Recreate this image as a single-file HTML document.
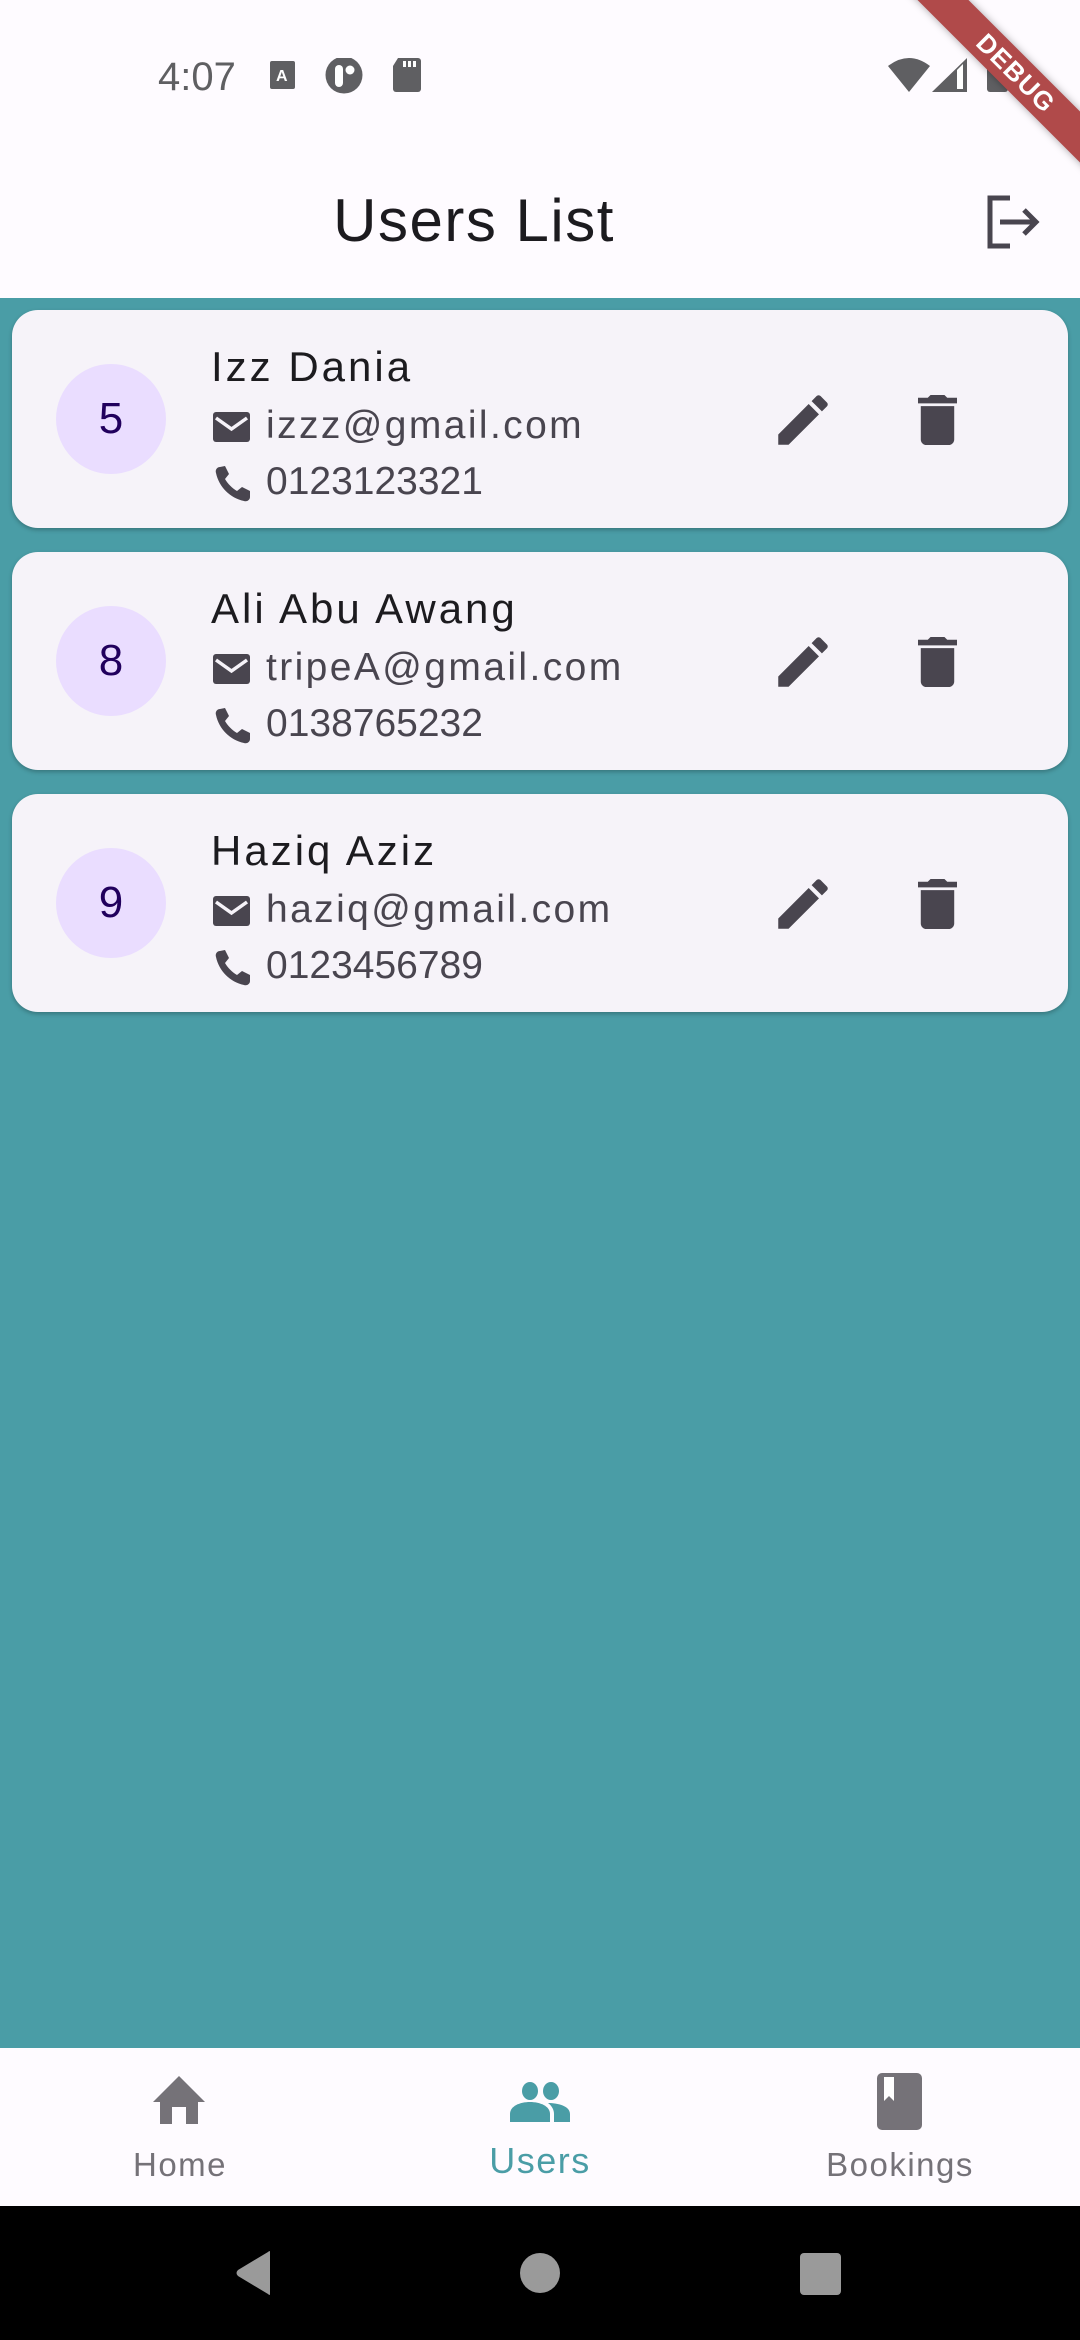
<!DOCTYPE html>
<html><head><meta charset="utf-8">
<style>
*{margin:0;padding:0;box-sizing:border-box}
html,body{width:1080px;height:2340px;overflow:hidden;background:#4A9DA6;font-family:"Liberation Sans",sans-serif}
.abs{position:absolute}
#top{left:0;top:0;width:1080px;height:298px;background:#FEFBFF}
.time{left:158px;top:55px;font-size:40px;color:#5f5f62}
.title{left:0;width:948px;top:186px;text-align:center;font-size:60px;color:#1c1b1f;letter-spacing:1.5px}
.card{left:12px;width:1056px;height:218px;background:#F6F3F9;border-radius:26px;box-shadow:0 2px 4px rgba(0,0,0,.25)}
.av{left:44px;top:54px;width:110px;height:110px;border-radius:50%;background:#EADDFF;color:#21005D;font-size:44px;text-align:center;line-height:110px}
.name{left:199px;top:33px;font-size:42px;color:#1c1b1f;letter-spacing:3px}
.line{left:254px;font-size:39px;color:#49454f;letter-spacing:2.4px}
.ph{letter-spacing:0}
.ico{fill:#49454f}
#nav{left:0;top:2048px;width:1080px;height:158px;background:#FEFBFF}
.lbl{font-size:33px;color:#757278;text-align:center;width:300px;letter-spacing:1.5px}
#sys{left:0;top:2206px;width:1080px;height:134px;background:#000}
</style></head><body>
<div id="top" class="abs"></div>
<div class="abs time">4:07</div>
<svg class="abs" style="left:268px;top:58px" width="160" height="40" viewBox="0 0 160 40">
 <rect x="2" y="3" width="25" height="28" rx="2" fill="#5f5f62"/>
 <text x="8" y="23" font-size="16" font-weight="bold" fill="#fff" font-family="Liberation Sans">A</text>
 <circle cx="76" cy="17" r="18.5" fill="#5f5f62"/>
 <rect x="67" y="7" width="8" height="22" rx="4" fill="#fff"/><circle cx="82" cy="12" r="4.5" fill="#fff"/>
 <path d="M130 0h20a3 3 0 0 1 3 3v28a3 3 0 0 1-3 3h-22a3 3 0 0 1-3-3V8z" fill="#5f5f62"/>
 <rect x="135" y="3" width="3" height="6" fill="#fff"/><rect x="140" y="3" width="3" height="6" fill="#fff"/><rect x="145" y="3" width="3" height="6" fill="#fff"/>
</svg>
<svg class="abs" style="left:886px;top:56px" width="130" height="40" viewBox="0 0 130 40">
 <path d="M2 10 Q23 -6 44 10 L23 36z" fill="#5f5f62"/>
 <path d="M46 36 L81 2 V36z" fill="#5f5f62"/><path d="M71 14 V33 H77 V8z" fill="#fff"/>
 <rect x="101" y="2" width="21" height="34" rx="3" fill="#5f5f62"/>
</svg>
<div class="abs" style="left:856px;top:55px;width:320px;height:36px;background:#b04a4a;transform:rotate(45deg);color:#fff;font-weight:bold;font-size:26px;text-align:center;line-height:36px;box-shadow:0 0 8px rgba(0,0,0,.35);letter-spacing:1px">DEBUG</div>
<div class="abs title">Users List</div>
<svg class="abs" style="left:984px;top:194px" width="60" height="56" viewBox="0 0 60 56">
 <path d="M26 4H6v48h20" fill="none" stroke="#49454f" stroke-width="5"/>
 <path d="M16 28h36M40 16l12 12-12 12" fill="none" stroke="#49454f" stroke-width="5"/>
</svg>

<div class="abs card" style="top:310px">
 <div class="abs av">5</div>
 <div class="abs name">Izz Dania</div>
 <svg class="abs" style="left:200px;top:100px" width="40" height="130" viewBox="0 0 40 130"><rect x="1" y="2" width="37" height="30" rx="3" class="ico"/><path d="M4 8l15.5 11L35 8" fill="none" stroke="#F6F3F9" stroke-width="3.5"/><path class="ico" d="M8 57c-3 0-5 3-4 6 3 14 14 25 28 28 3 1 6-1 6-4v-6l-8-4-5 4c-5-3-9-7-12-12l4-5-4-8z"/></svg>
 <div class="abs line" style="top:94px">izzz@gmail.com</div>
 <div class="abs line ph" style="top:150px">0123123321</div>
 <svg class="abs" style="left:758px;top:77px" width="66" height="66" viewBox="0 0 24 24"><path class="ico" d="M3 17.25V21h3.75L17.81 9.94l-3.75-3.75L3 17.25zM20.71 7.04a1 1 0 0 0 0-1.41l-2.34-2.34a1 1 0 0 0-1.41 0l-1.83 1.83 3.75 3.75 1.83-1.83z"/></svg>
 <svg class="abs" style="left:906px;top:85px" width="39" height="50" viewBox="5 3 14 18" preserveAspectRatio="none"><path class="ico" d="M6 19c0 1.1.9 2 2 2h8c1.1 0 2-.9 2-2V7H6v12zM19 4h-3.5l-1-1h-5l-1 1H5v2h14V4z"/></svg>
</div>
<div class="abs card" style="top:552px">
 <div class="abs av">8</div>
 <div class="abs name">Ali Abu Awang</div>
 <svg class="abs" style="left:200px;top:100px" width="40" height="130" viewBox="0 0 40 130"><rect x="1" y="2" width="37" height="30" rx="3" class="ico"/><path d="M4 8l15.5 11L35 8" fill="none" stroke="#F6F3F9" stroke-width="3.5"/><path class="ico" d="M8 57c-3 0-5 3-4 6 3 14 14 25 28 28 3 1 6-1 6-4v-6l-8-4-5 4c-5-3-9-7-12-12l4-5-4-8z"/></svg>
 <div class="abs line" style="top:94px">tripeA@gmail.com</div>
 <div class="abs line ph" style="top:150px">0138765232</div>
 <svg class="abs" style="left:758px;top:77px" width="66" height="66" viewBox="0 0 24 24"><path class="ico" d="M3 17.25V21h3.75L17.81 9.94l-3.75-3.75L3 17.25zM20.71 7.04a1 1 0 0 0 0-1.41l-2.34-2.34a1 1 0 0 0-1.41 0l-1.83 1.83 3.75 3.75 1.83-1.83z"/></svg>
 <svg class="abs" style="left:906px;top:85px" width="39" height="50" viewBox="5 3 14 18" preserveAspectRatio="none"><path class="ico" d="M6 19c0 1.1.9 2 2 2h8c1.1 0 2-.9 2-2V7H6v12zM19 4h-3.5l-1-1h-5l-1 1H5v2h14V4z"/></svg>
</div>
<div class="abs card" style="top:794px">
 <div class="abs av">9</div>
 <div class="abs name">Haziq Aziz</div>
 <svg class="abs" style="left:200px;top:100px" width="40" height="130" viewBox="0 0 40 130"><rect x="1" y="2" width="37" height="30" rx="3" class="ico"/><path d="M4 8l15.5 11L35 8" fill="none" stroke="#F6F3F9" stroke-width="3.5"/><path class="ico" d="M8 57c-3 0-5 3-4 6 3 14 14 25 28 28 3 1 6-1 6-4v-6l-8-4-5 4c-5-3-9-7-12-12l4-5-4-8z"/></svg>
 <div class="abs line" style="top:94px">haziq@gmail.com</div>
 <div class="abs line ph" style="top:150px">0123456789</div>
 <svg class="abs" style="left:758px;top:77px" width="66" height="66" viewBox="0 0 24 24"><path class="ico" d="M3 17.25V21h3.75L17.81 9.94l-3.75-3.75L3 17.25zM20.71 7.04a1 1 0 0 0 0-1.41l-2.34-2.34a1 1 0 0 0-1.41 0l-1.83 1.83 3.75 3.75 1.83-1.83z"/></svg>
 <svg class="abs" style="left:906px;top:85px" width="39" height="50" viewBox="5 3 14 18" preserveAspectRatio="none"><path class="ico" d="M6 19c0 1.1.9 2 2 2h8c1.1 0 2-.9 2-2V7H6v12zM19 4h-3.5l-1-1h-5l-1 1H5v2h14V4z"/></svg>
</div>

<div id="nav" class="abs"></div>
<svg class="abs" style="left:152px;top:2076px" width="56" height="50" viewBox="0 0 56 50"><path d="M27 0 L1 26 H8 V48 H20 V31 H34 V48 H46 V26 H53z" fill="#757278"/></svg>
<svg class="abs" style="left:508px;top:2082px" width="64" height="40" viewBox="0 0 64 40"><ellipse cx="22" cy="9" rx="8" ry="9" fill="#4A9DA6"/><ellipse cx="43" cy="9" rx="8" ry="9" fill="#4A9DA6"/><path d="M2 40V32C2 24 12 20 22 20s20 4 20 12v8z" fill="#4A9DA6"/><path d="M46 40V32c0-4-2-8-6-11 10 0 22 3 22 11v8z" fill="#4A9DA6"/></svg>
<svg class="abs" style="left:877px;top:2073px" width="46" height="58" viewBox="0 0 46 58"><rect x="0" y="0" width="45" height="57" rx="5" fill="#757278"/><path d="M7 4h10v24l-5-5-5 5z" fill="#fff"/></svg>
<div class="abs lbl" style="left:30px;top:2146px">Home</div>
<div class="abs lbl" style="left:390px;top:2140px;color:#4A9DA6;font-size:36px">Users</div>
<div class="abs lbl" style="left:750px;top:2146px">Bookings</div>

<div id="sys" class="abs"></div>
<svg class="abs" style="left:234px;top:2250px" width="40" height="46" viewBox="0 0 40 46"><path d="M36 2 V44 Q36 46 34 44 L4 26 Q1 23 4 20 L34 2 Q36 0 36 2z" fill="#9a9a9a"/></svg>
<div class="abs" style="left:520px;top:2253px;width:40px;height:40px;border-radius:50%;background:#9a9a9a"></div>
<div class="abs" style="left:800px;top:2253px;width:41px;height:42px;border-radius:4px;background:#9a9a9a"></div>
</body></html>
